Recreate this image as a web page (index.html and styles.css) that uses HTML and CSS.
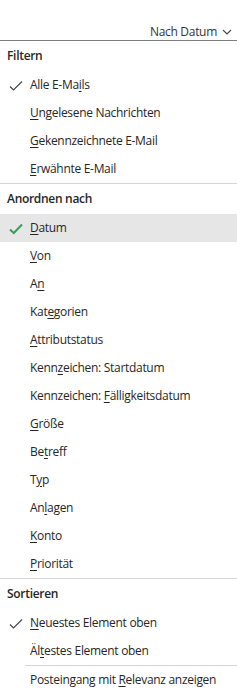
FILE: index.html
```html
<!DOCTYPE html>
<html lang="de">
<head>
<meta charset="utf-8">
<link rel="stylesheet" href="styles.css">
</head>
<body>
<div class="menu">
  <div class="topbar">
    <span class="sort-label">Nach Datum</span>
    <svg class="chev" width="10" height="6" viewBox="0 0 10 6"><polyline points="1,1 5,5 9,1" fill="none" stroke="#444" stroke-width="1.1"/></svg>
  </div>

  <div class="head">Filtern</div>
  <div class="item"><svg class="check" width="14" height="12" viewBox="0 0 14 12"><polyline points="1,6.5 4.5,10 13,1.5" fill="none" stroke="#444" stroke-width="1.1"/></svg>Alle E-Ma<u>i</u>ls</div>
  <div class="item"><u>U</u>ngelesene Nachrichten</div>
  <div class="item"><u>G</u>ekennzeichnete E-Mail</div>
  <div class="item"><u>E</u>rwähnte E-Mail</div>

  <div class="sep"></div>
  <div class="head">Anordnen nach</div>
  <div class="item selected"><svg class="check green" width="14" height="12" viewBox="0 0 14 12"><polyline points="1,6.5 4.8,10 13,1.5" fill="none" stroke="#3f9b5b" stroke-width="2"/></svg><u>D</u>atum</div>
  <div class="item"><u>V</u>on</div>
  <div class="item">A<u>n</u></div>
  <div class="item">Kat<u>e</u>gorien</div>
  <div class="item"><u>A</u>ttributstatus</div>
  <div class="item">Kenn<u>z</u>eichen: Startdatum</div>
  <div class="item">Kennzeichen: <u>F</u>älligkeitsdatum</div>
  <div class="item"><u>G</u>röße</div>
  <div class="item">Be<u>t</u>reff</div>
  <div class="item">T<u>y</u>p</div>
  <div class="item">An<u>l</u>agen</div>
  <div class="item"><u>K</u>onto</div>
  <div class="item"><u>P</u>riorität</div>

  <div class="sep"></div>
  <div class="head">Sortieren</div>
  <div class="item"><svg class="check" width="14" height="12" viewBox="0 0 14 12"><polyline points="1,6.5 4.5,10 13,1.5" fill="none" stroke="#444" stroke-width="1.1"/></svg><u>N</u>euestes Element oben</div>
  <div class="item">Äl<u>t</u>estes Element oben</div>
  <div class="sep indent"></div>
  <div class="item">Posteingang mit <u>R</u>elevanz anzeigen</div>
</div>
</body>
</html>
```

FILE: styles.css
```css
* { box-sizing: border-box; }
html, body { margin: 0; padding: 0; background: #fff; }
body {
  font-family: "Open Sans", "Noto Sans", sans-serif;
  font-size: 12px;
  letter-spacing: -0.3px;
  color: #262626;
  width: 237px;
}
.menu { display: flex; flex-direction: column; }
.topbar {
  height: 41px;
  border-bottom: 1px solid #7d7d7d;
  display: flex;
  align-items: center;
  justify-content: flex-end;
  padding: 22px 5px 0 0;
  gap: 5px;
  color: #333;
}
.chev { display: block; margin-top: 1px; }
.head {
  height: 30px;
  line-height: 30px;
  padding-left: 7px;
  font-weight: 600;
  color: #262626;
}
.item {
  position: relative;
  height: 28px;
  line-height: 28px;
  padding-left: 30px;
  white-space: nowrap;
}
.item u { text-decoration-thickness: 1px; text-underline-offset: 2px; }
.item.selected { background: #e6e6e6; }
.check { position: absolute; left: 9px; top: 9px; }
.sep { height: 1px; background: #d4d4d4; }
.sep.indent { margin-left: 25px; }
```
